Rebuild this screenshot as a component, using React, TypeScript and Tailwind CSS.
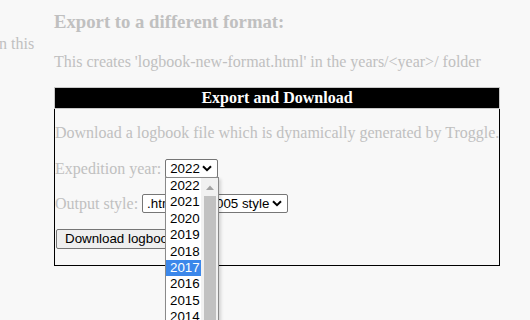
import React from "react";

function Chevron() {
  return (
    <svg width="10" height="7" viewBox="0 0 10 7" className="shrink-0">
      <path d="M1 1.2 L5 5.2 L9 1.2" fill="none" stroke="#000" strokeWidth="2" />
    </svg>
  );
}

export default function App() {
  const years = ["2022", "2021", "2020", "2019", "2018", "2017", "2016", "2015", "2014", "2013"];
  return (
    <div className="w-[530px] h-[320px] bg-[#f8f8f8] overflow-hidden flex font-['Liberation_Serif',serif] text-[16px] text-[#c0c0c0]">
      <div className="w-[54px] shrink-0 overflow-hidden">
        <div className="mt-[35px] leading-[18px] whitespace-nowrap -ml-[1px]">n this</div>
      </div>
      <div className="w-[446px] shrink-0">
        <h3 className="mt-[11px] text-[18.72px] font-bold leading-[22px] whitespace-nowrap">Export to a different format:</h3>
        <p className="mt-[20px] leading-[18px] whitespace-nowrap">This creates 'logbook-new-format.html' in the years/&lt;year&gt;/ folder</p>
        <div className="mt-[16px] relative">
          <div className="h-[22px] bg-black border border-[#c8c8c8] text-white font-bold text-center leading-[20px]">Export and Download</div>
          <div className="border-x border-b border-black pb-[16px]">
            <p className="pt-[15px] leading-[18px] whitespace-nowrap">Download a logbook file which is dynamically generated by Troggle.</p>
            <div className="mt-[17px] flex items-center gap-[4px] h-[19px] leading-[18px]">
              <span className="whitespace-nowrap">Expedition year:</span>
              <div className="w-[53px] h-[19px] bg-white border border-[#767676] rounded-[2px] flex items-center justify-between pl-[4px] pr-[5px] font-['Liberation_Sans',sans-serif] text-[13.33px] text-black">
                <span>2022</span>
                <Chevron />
              </div>
            </div>
            <div className="mt-[16px] flex items-center gap-[4px] h-[19px] leading-[18px]">
              <span className="whitespace-nowrap">Output style:</span>
              <div className="w-[146px] h-[19px] bg-white border border-[#767676] rounded-[2px] flex items-center justify-between pl-[4px] pr-[5px] font-['Liberation_Sans',sans-serif] text-[13.33px] text-black whitespace-nowrap">
                <span>.html file - 2005 style</span>
                <Chevron />
              </div>
            </div>
            <div className="mt-[16px] flex">
              <div className="h-[20px] px-[8px] bg-[#efefef] border border-[#767676] rounded-[2px] flex items-center font-['Liberation_Sans',sans-serif] text-[13.33px] text-black whitespace-nowrap ml-[1px]">
                Download logbook
              </div>
            </div>
          </div>
          <div className="absolute left-[111px] top-[90px] w-[54px] h-[200px] bg-white border border-[#8a8a8a] flex font-['Liberation_Sans',sans-serif] text-[13.33px] text-black shadow-[2px_2px_3px_rgba(0,0,0,0.15)]">
            <div className="w-[35px] shrink-0">
              {years.map((y) => (
                <div
                  key={y}
                  className={
                    y === "2017"
                      ? "h-[16.4px] leading-[16.4px] pl-[4px] bg-[#3b87ea] text-white"
                      : "h-[16.4px] leading-[16.4px] pl-[4px]"
                  }
                >
                  {y}
                </div>
              ))}
            </div>
            <div className="w-[17px] shrink-0 bg-[#f1f1f1] flex flex-col items-center">
              <svg width="8" height="5" viewBox="0 0 8 5" className="mt-[7px]">
                <path d="M0 5 L4 0.5 L8 5 Z" fill="#a3a3a3" />
              </svg>
              <div className="mt-[6px] w-[12px] h-[180px] bg-[#c1c1c1]" />
            </div>
          </div>
        </div>
      </div>
    </div>
  );
}
